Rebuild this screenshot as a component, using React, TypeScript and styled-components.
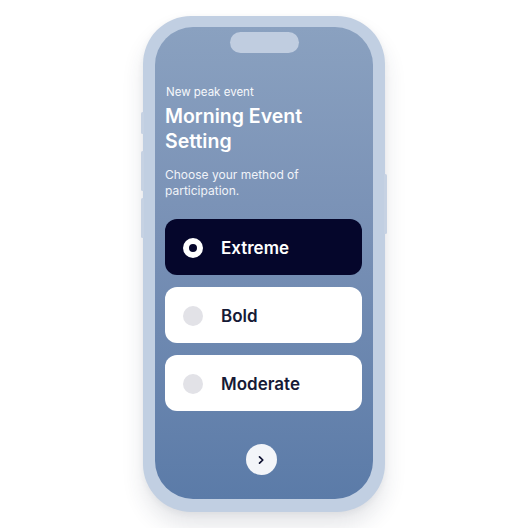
import React, { useState } from "react";
import styled, { createGlobalStyle } from "styled-components";

const Global = createGlobalStyle`
  html, body { margin: 0; padding: 0; background: #ffffff; }
  body { font-family: "Inter", "Lato", "Noto Sans", sans-serif; -webkit-font-smoothing: antialiased; }
`;

const Page = styled.div`
  width: 528px;
  height: 528px;
  display: flex;
  justify-content: center;
  padding-top: 16px;
  box-sizing: border-box;
`;

const Phone = styled.div`
  position: relative;
  width: 242px;
  height: 496px;
  box-sizing: border-box;
  padding: 11px 12px 13px 12px;
  border-radius: 48px;
  background: #c1cfe2;
  box-shadow: 0 14px 22px rgba(40, 50, 70, 0.12), 0 2px 6px rgba(40, 50, 70, 0.06);
  display: flex;
`;

const SideButton = styled.div<{ $side: "left" | "right"; $top: number; $h: number }>`
  position: absolute;
  ${(p) => (p.$side === "left" ? "left: -2px;" : "right: -2px;")}
  top: ${(p) => p.$top}px;
  width: 3px;
  height: ${(p) => p.$h}px;
  border-radius: 2px;
  background: #c6d2e3;
`;

const Screen = styled.div`
  flex: 1;
  border-radius: 38px;
  background: linear-gradient(180deg, #8aa1c0 0%, #7890b5 45%, #5b7ba8 100%);
  display: flex;
  flex-direction: column;
  padding: 5px 11px 24px 10px;
  box-sizing: border-box;
`;

const Notch = styled.div`
  align-self: center;
  width: 69px;
  height: 21px;
  border-radius: 11px;
  background: #c0cde0;
  margin-left: 1px;
`;

const Eyebrow = styled.div`
  margin-top: 32px;
  padding-left: 1px;
  font-size: 11.5px;
  line-height: 14px;
  color: #f6f8fb;
  font-weight: 400;
`;

const Title = styled.h1`
  margin: 5px 0 0 0;
  font-size: 19.5px;
  line-height: 25px;
  font-weight: 600;
  color: #ffffff;
  letter-spacing: 0;
`;

const Subtitle = styled.p`
  margin: 13px 0 0 0;
  font-size: 12px;
  line-height: 16px;
  color: #f0f3f8;
  font-weight: 400;
  max-width: 150px;
`;

const Options = styled.div`
  margin-top: 20px;
  display: flex;
  flex-direction: column;
  gap: 12px;
`;

const Option = styled.button<{ $selected: boolean }>`
  height: 56px;
  border: none;
  border-radius: 12px;
  background: ${(p) => (p.$selected ? "#05062b" : "#ffffff")};
  color: ${(p) => (p.$selected ? "#ffffff" : "#161a36")};
  display: flex;
  align-items: center;
  gap: 18px;
  padding: 1px 0 0 18px;
  font-family: inherit;
  font-size: 17px;
  font-weight: 600;
  cursor: pointer;
  text-align: left;
`;

const Radio = styled.span<{ $selected: boolean }>`
  width: 20px;
  height: 20px;
  border-radius: 50%;
  box-sizing: border-box;
  background: ${(p) => (p.$selected ? "#05062b" : "#e2e2e7")};
  border: ${(p) => (p.$selected ? "6px solid #ffffff" : "none")};
  flex-shrink: 0;
`;

const Spacer = styled.div`
  flex: 1;
`;

const NextButton = styled.button`
  align-self: center;
  margin-right: 5px;
  width: 31px;
  height: 31px;
  border-radius: 50%;
  border: none;
  background: #f3f5f9;
  display: flex;
  align-items: center;
  justify-content: center;
  padding: 0;
  cursor: pointer;
`;

const options = ["Extreme", "Bold", "Moderate"];

export default function App() {
  const [selected, setSelected] = useState("Extreme");
  return (
    <>
      <Global />
      <Page>
        <Phone>
          <SideButton $side="left" $top={96} $h={22} />
          <SideButton $side="left" $top={135} $h={40} />
          <SideButton $side="left" $top={182} $h={40} />
          <SideButton $side="right" $top={158} $h={60} />
          <Screen>
            <Notch />
            <Eyebrow>New peak event</Eyebrow>
            <Title>
              Morning Event
              <br />
              Setting
            </Title>
            <Subtitle>Choose your method of participation.</Subtitle>
            <Options>
              {options.map((o) => (
                <Option key={o} $selected={selected === o} onClick={() => setSelected(o)}>
                  <Radio $selected={selected === o} />
                  {o}
                </Option>
              ))}
            </Options>
            <Spacer />
            <NextButton aria-label="Next">
              <svg width="10" height="10" viewBox="0 0 10 10" fill="none">
                <path d="M3.5 1.8 L6.8 5 L3.5 8.2" stroke="#0d1030" strokeWidth="1.7" strokeLinecap="round" strokeLinejoin="round" />
              </svg>
            </NextButton>
          </Screen>
        </Phone>
      </Page>
    </>
  );
}
